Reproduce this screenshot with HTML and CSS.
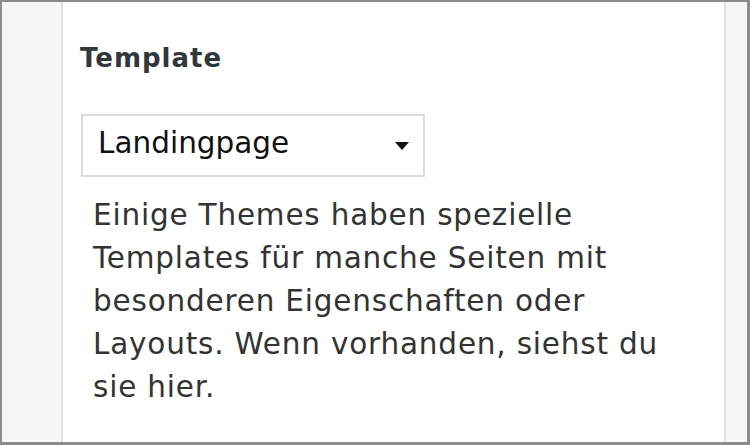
FILE: index.html
```html
<!DOCTYPE html>
<html lang="de">

<head>
    <meta charset="UTF-8">
    <meta name="viewport" content="width=device-width, initial-scale=1.0">
    <title>Template</title>
    <link rel="stylesheet" href="styles.css">
</head>

<body>
    <div class="frame">
        <div class="side side-left"></div>

        <div class="panel">
            <h2 class="panel-title">Template</h2>

            <div class="select-box">
                <span class="select-value">Landingpage</span>
                <span class="select-arrow"></span>
            </div>

            <p class="help-text">Einige Themes haben spezielle Templates für manche Seiten mit besonderen Eigenschaften oder Layouts. Wenn vorhanden, siehst du sie hier.</p>
        </div>

        <div class="side side-right"></div>
    </div>
</body>

</html>
```

FILE: styles.css
```css
html,
body {
    margin: 0;
    height: 100%;
}

body {
    font-family: "DejaVu Sans", Verdana, sans-serif;
    color: #333;
    background-color: #8c8c8c;
}

.frame {
    display: flex;
    height: 100%;
    box-sizing: border-box;
    border-style: solid;
    border-color: #8c8c8c;
    border-width: 2px 3px 3px 2px;
}

.side {
    background-color: #f6f6f6;
}

.side-left {
    width: 59px;
    border-right: 2px solid #e1e1e1;
}

.side-right {
    width: 21px;
    border-left: 2px solid #e1e1e1;
}

.panel {
    flex: 1;
    background-color: #fff;
    padding: 41px 17px 0 17px;
}

.panel-title {
    margin: 0 0 41px 0;
    font-size: 26px;
    line-height: 30px;
    font-weight: bold;
    letter-spacing: 1px;
    color: #32373c;
}

.select-box {
    width: 326px;
    height: 59px;
    border: 2px solid #dcdcdc;
    margin-left: 1px;
    display: flex;
    align-items: center;
    justify-content: space-between;
    padding: 0 14px 0 0;
}

.select-value {
    padding-left: 15px;
    margin-bottom: 5px;
    font-size: 29.5px;
    color: #111;
}

.select-arrow {
    width: 0;
    height: 0;
    border-left: 7px solid transparent;
    border-right: 7px solid transparent;
    border-top: 8px solid #111;
}

.help-text {
    margin: 17px 0 0 0;
    padding-left: 13px;
    width: 600px;
    font-size: 29.5px;
    line-height: 43px;
    letter-spacing: 0.8px;
    color: #333;
}
```
